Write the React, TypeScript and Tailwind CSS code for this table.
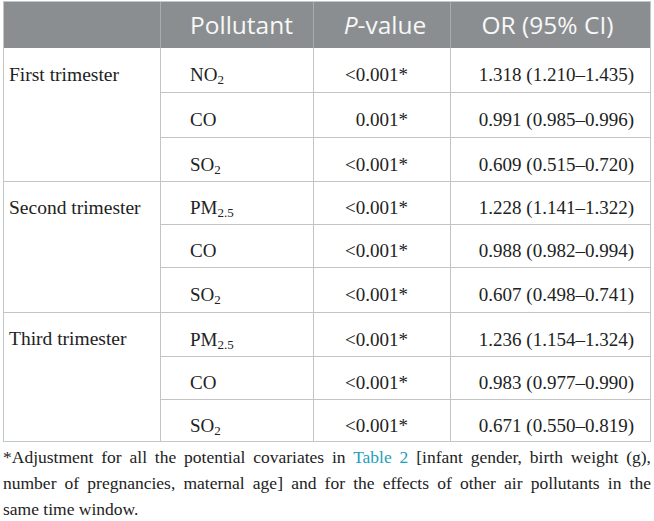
import React from "react";

const serif = { fontFamily: '"Liberation Serif", "Times New Roman", serif' };

type Row = { pol: React.ReactNode; p: string; or: string };

const NO2 = (
  <>
    NO<sub className="text-[13px]">2</sub>
  </>
);
const SO2 = (
  <>
    SO<sub className="text-[13px]">2</sub>
  </>
);
const PM = (
  <>
    PM<sub className="text-[13px]">2.5</sub>
  </>
);

const groups: { label: string; rows: Row[] }[] = [
  {
    label: "First trimester",
    rows: [
      { pol: NO2, p: "<0.001*", or: "1.318 (1.210–1.435)" },
      { pol: "CO", p: "0.001*", or: "0.991 (0.985–0.996)" },
      { pol: SO2, p: "<0.001*", or: "0.609 (0.515–0.720)" },
    ],
  },
  {
    label: "Second trimester",
    rows: [
      { pol: PM, p: "<0.001*", or: "1.228 (1.141–1.322)" },
      { pol: "CO", p: "<0.001*", or: "0.988 (0.982–0.994)" },
      { pol: SO2, p: "<0.001*", or: "0.607 (0.498–0.741)" },
    ],
  },
  {
    label: "Third trimester",
    rows: [
      { pol: PM, p: "<0.001*", or: "1.236 (1.154–1.324)" },
      { pol: "CO", p: "<0.001*", or: "0.983 (0.977–0.990)" },
      { pol: SO2, p: "<0.001*", or: "0.671 (0.550–0.819)" },
    ],
  },
];

const rowHeights = [
  [44, 45, 44],
  [43, 43, 45],
  [44, 43, 42],
];

export default function App() {
  return (
    <div className="w-[654px] h-[521px] bg-white pl-[3px] pr-[3px] pt-[1px] text-[#222]">
      <div className="w-[648px] border border-[#bfcac6]">
        {/* header */}
        <div
          className="grid grid-cols-[157px_153px_137px_199px] h-[46px] bg-[#8b8e90] text-[#f7f7f7] text-[24.5px] leading-none"
          style={{ fontFamily: '"Open Sans", sans-serif' }}
        >
          <div className="border-r border-[#a9acae]" />
          <div className="border-r border-[#a9acae] flex items-center pl-[29px]">Pollutant</div>
          <div className="border-r border-[#a9acae] flex items-center justify-center pl-[6px]">
            <span className="italic">P</span>-value
          </div>
          <div className="flex items-center justify-center pr-[6px]">OR (95% CI)</div>
        </div>
        {/* body */}
        {groups.map((g, gi) => (
          <div
            key={g.label}
            className={`grid grid-cols-[157px_490px] ${gi > 0 ? "border-t border-[#c4c4c4]" : ""}`}
            style={serif}
          >
            <div className="border-r border-[#c4c4c4]">
              <div
                className="flex items-center pl-[5px] pt-[9px] text-[19.5px] leading-none"
                style={{ height: rowHeights[gi][0] - (gi > 0 ? 1 : 0) }}
              >
                {g.label}
              </div>
            </div>
            <div className="flex flex-col">
              {g.rows.map((r, ri) => (
                <div
                  key={ri}
                  className={`grid grid-cols-[153px_137px_200px] text-[19px] leading-none ${
                    ri > 0 ? "border-t border-[#c4c4c4]" : ""
                  }`}
                  style={{ height: rowHeights[gi][ri] - (gi > 0 && ri === 0 ? 1 : 0) }}
                >
                  <div className="border-r border-[#c4c4c4] flex items-center pl-[29px] pt-[9px]">
                    <span>{r.pol}</span>
                  </div>
                  <div className="border-r border-[#c4c4c4] flex items-center justify-end pr-[42px] pt-[9px]">
                    {r.p}
                  </div>
                  <div className="flex items-center justify-end pr-[17px] pt-[9px]">{r.or}</div>
                </div>
              ))}
            </div>
          </div>
        ))}
      </div>
      {/* footnote */}
      <div className="mt-[2px] w-[648px] text-[17.5px] leading-[26px]" style={serif}>
        <div className="text-justify [text-align-last:justify]">
          *Adjustment for all the potential covariates in{" "}
          <span className="text-[#1ba0bb]">Table 2</span> [infant gender, birth weight (g),
        </div>
        <div className="text-justify [text-align-last:justify]">
          number of pregnancies, maternal age] and for the effects of other air pollutants in the
        </div>
        <div>same time window.</div>
      </div>
    </div>
  );
}
